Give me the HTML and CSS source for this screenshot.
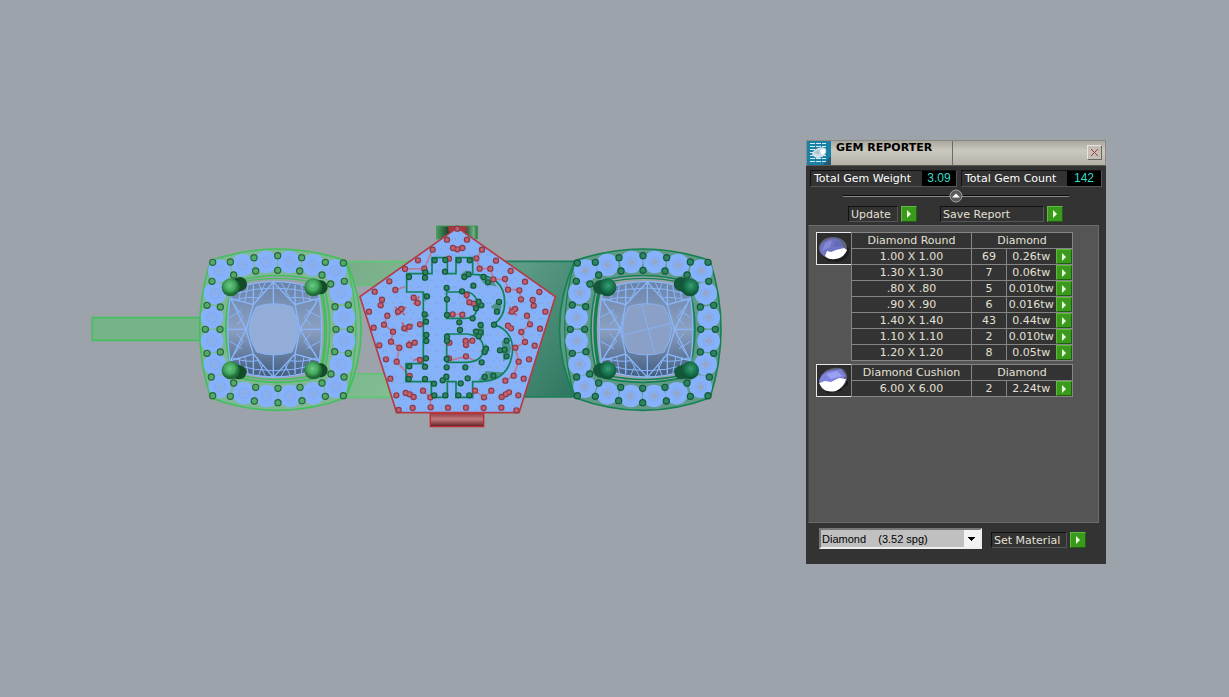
FILE: index.html
```html
<!DOCTYPE html>
<html lang="en">

<head>
    <meta charset="UTF-8">
    <meta name="viewport" content="width=device-width, initial-scale=1.0">
    <title>Gem Reporter</title>
    <link rel="stylesheet" href="styles.css">
</head>

<body>

    <main class="viewport">
        <svg class="model" viewBox="0 -30 1980 630" role="img" aria-label="Bracelet model">
            <defs>
                <linearGradient id="band-light" x1="0" y1="0" x2="1" y2="1">
                    <stop offset="0" stop-color="#78ad89" />
                    <stop offset="1" stop-color="#86c596" />
                </linearGradient>
                <linearGradient id="band-dark" x1="0" y1="0" x2="1" y2="1">
                    <stop offset="0" stop-color="#6da894" />
                    <stop offset="1" stop-color="#2c755e" />
                </linearGradient>
                <linearGradient id="tab-green">
                    <stop offset="0" stop-color="#4b9c63" />
                    <stop offset=".3" stop-color="#1a3f28" />
                    <stop offset=".7" stop-color="#1f5233" />
                    <stop offset=".9" stop-color="#6fae83" />
                    <stop offset="1" stop-color="#2a6b40" />
                </linearGradient>
                <linearGradient id="tab-red" x1="0" y1="0" x2="0" y2="1">
                    <stop offset="0" stop-color="#8e3b42" />
                    <stop offset=".45" stop-color="#c4787e" />
                    <stop offset="1" stop-color="#5c1f26" />
                </linearGradient>
                <linearGradient id="stone" x1="0" y1="0" x2="0" y2="1">
                    <stop offset="0" stop-color="#6a84a8" />
                    <stop offset=".5" stop-color="#8ba0c2" />
                    <stop offset="1" stop-color="#435d7e" />
                </linearGradient>
                <radialGradient id="light-prong" cx=".45" cy=".4">
                    <stop offset="0" stop-color="#6fc88a" />
                    <stop offset=".6" stop-color="#43a35c" />
                    <stop offset="1" stop-color="#1f6b38" />
                </radialGradient>
                <radialGradient id="dark-prong" cx=".45" cy=".4">
                    <stop offset="0" stop-color="#3c9c74" />
                    <stop offset=".6" stop-color="#1b7550" />
                    <stop offset="1" stop-color="#0f5638" />
                </radialGradient>
                <pattern id="pave" width="52" height="48" patternUnits="userSpaceOnUse">
                    <rect width="52" height="48" fill="#86b2fa" />
                    <path d="M13 4l3 3M36 4l-3 3M24 44l4 4M2 24h4M46 24h3" stroke="#6b86c4" stroke-width="2" />
                    <path d="M21 24h10M26 19v10M22 20l8 8M30 20l-8 8" stroke="#92abd6" stroke-width="2" />
                </pattern>

                <path id="halo-gems" d="M418 122h0M488 105h0M558 96h0M628 96h0M700 105h0M766 122h0M405 190h0M396 262h0M396 333h0M405 403h0M420 470h0M492 490h0M560 498h0M630 498h0M700 490h0M768 470h0M783 188h0M792 262h0M792 333h0M783 403h0" />
                <path id="halo-beads" d="M398 97h0M451 96h0M522 83h0M593 77h0M665 83h0M736 97h0M790 99h0M461 135h0M527 123h0M593 121h0M659 123h0M726 135h0M752 162h0M396 154h0M381 226h0M421 231h0M376 298h0M420 298h0M381 370h0M421 366h0M394 441h0M398 497h0M461 459h0M451 499h0M523 513h0M527 472h0M594 518h0M594 475h0M666 512h0M660 472h0M736 499h0M726 459h0M790 497h0M753 432h0M793 154h0M805 225h0M765 230h0M768 298h0M811 298h0M764 365h0M805 370h0M792 441h0" />
                <path id="red-beads" d="M322 41h0M291 74h0M351 74h0M248 104h0M309 99h0M337 99h0M322 103h0M396 104h0M204 136h0M297 131h0M379 130h0M438 137h0M165 162h0M223 161h0M389 161h0M421 161h0M482 168h0M118 199h0M430 193h0M465 192h0M525 200h0M74 230h0M136 225h0M508 226h0M474 224h0M568 231h0M96 254h0M92 271h0M548 255h0M551 272h0M191 248h0M203 264h0M513 253h0M57 290h0M154 282h0M144 290h0M586 290h0M486 290h0M495 282h0M112 302h0M531 302h0M71 338h0M102 329h0M163 340h0M178 335h0M540 328h0M570 341h0M474 332h0M483 340h0M129 350h0M514 351h0M210 328h0M88 391h0M123 380h0M525 381h0M554 392h0M177 390h0M194 383h0M148 398h0M496 398h0M108 433h0M140 440h0M537 433h0M506 440h0M210 435h0M121 491h0M179 483h0M521 491h0M466 497h0M491 482h0M139 541h0M167 534h0M179 538h0M191 546h0M219 527h0M455 546h0M467 538h0M477 532h0M424 527h0M375 527h0M402 547h0M505 541h0M241 547h0M146 585h0M188 579h0M242 577h0M294 578h0M348 578h0M401 579h0M454 578h0M499 586h0M350 240h0M358 262h0M372 266h0M308 298h0M337 299h0M347 378h0M367 377h0M348 390h0M298 383h0M348 424h0M297 430h0" />
                <path id="green-beads" d="M254 136h0M286 135h0M326 136h0M359 136h0M177 186h0M225 188h0M226 172h0M285 170h0M343 186h0M356 178h0M401 186h0M414 202h0M290 219h0M370 212h0M336 229h0M231 244h0M291 253h0M447 261h0M386 260h0M378 280h0M394 271h0M224 298h0M291 300h0M441 290h0M368 310h0M328 322h0M392 330h0M432 329h0M228 320h0M330 345h0M229 360h0M291 365h0M378 350h0M392 352h0M386 364h0M229 378h0M291 377h0M470 377h0M408 401h0M404 411h0M450 406h0M464 404h0M470 424h0M228 430h0M290 432h0M290 457h0M346 457h0M395 442h0M225 455h0M178 454h0M176 492h0M225 492h0M252 506h0M278 496h0M289 485h0M332 505h0M353 490h0M404 486h0M430 482h0M253 541h0M286 541h0M325 541h0M358 541h0" />

                <!-- cushion halo with centre stone, coloured by .light / .dark -->
                <g id="halo">
                    <path class="metal edge" d="M392 92Q593 22 797 92Q890 298 797 503Q593 579 392 503Q326 298 392 92Z" />
                    <path class="edge line" d="M797 92Q859 298 797 503" />
                    <use href="#halo-gems" class="gem" />
                    <use href="#halo-gems" class="gem-speckle" />
                    <use href="#halo-gems" class="gem-table" />
                    <path class="gem-cross" d="M408 122h20M418 112v20M478 105h20M488 95v20M548 96h20M558 86v20M618 96h20M628 86v20M690 105h20M700 95v20M756 122h20M766 112v20M395 190h20M405 180v20M386 262h20M396 252v20M386 333h20M396 323v20M395 403h20M405 393v20M410 470h20M420 460v20M482 490h20M492 480v20M550 498h20M560 488v20M620 498h20M630 488v20M690 490h20M700 480v20M758 470h20M768 460v20M773 188h20M783 178v20M782 262h20M792 252v20M782 333h20M792 323v20M773 403h20M783 393v20" />
                    <path class="opening edge" d="M462 155Q593 118 728 155Q770 298 728 440Q593 474 462 440Q412 298 462 155Z" />
                    <path class="edge rail" d="M722 172Q752 298 722 425" />
                    <path class="edge line" d="M452 180Q430 298 452 415M475 158Q590 132 705 158M475 435Q590 462 705 435" />
                    <path fill="url(#stone)" stroke="#8ab6fb" stroke-width="4" d="M478 171Q580 139 691 171Q714 180 718 204Q732 298 718 393Q714 416 691 425Q580 457 478 425Q455 416 450 393Q436 298 450 204Q455 180 478 171Z" />
                    <path class="facet" d="M520 224L498 300L520 372M645 224L660 300L645 372M452 205L520 224L580 156L645 224L716 205M452 392L520 372L580 442L645 372L716 392M445 298H498L452 205M498 298L452 392M660 298H724M716 205L660 298L716 392M580 156V224M580 442V372M520 224V164M645 224V164M520 372V432M645 372V432" />
                    <path class="facet thin" d="M470 190Q580 158 700 190M458 212Q500 198 535 204M628 204Q665 198 710 212M470 406Q580 438 700 406M458 384Q500 398 535 392M628 392Q665 398 710 384M484 170L476 215M504 166L494 218M536 160L548 190M556 158L530 215M604 158L635 215M630 160L616 190M664 166L672 218M684 170L690 215M484 426L476 381M504 430L494 378M536 436L548 406M556 438L530 381M604 438L635 381M630 436L616 406M664 430L672 378M684 426L690 381M462 222L490 262M450 262L485 240M470 285L490 262M462 374L490 334M450 334L485 356M470 311L490 334M708 222L672 262M720 262L680 240M692 285L672 262M708 374L672 334M720 334L680 356M692 311L672 334" />
                    <path class="stone-table" d="M530 230Q580 212 636 230Q672 298 636 366Q580 384 530 366Q486 298 530 230Z" />
                    <path class="prong-shadow" d="M452 172l28 -10M700 172l22 0M452 421l26 6M700 421l22 0" />
                    <g class="prongs">
                        <circle cx="452" cy="172" r="27" />
                        <circle cx="700" cy="172" r="27" />
                        <circle cx="452" cy="421" r="27" />
                        <circle cx="700" cy="421" r="27" />
                    </g>
                    <path class="prong-light" d="M439 169a13 13 0 1 0 26 0a13 13 0 1 0 -26 0M687 169a13 13 0 1 0 26 0a13 13 0 1 0 -26 0M439 418a13 13 0 1 0 26 0a13 13 0 1 0 -26 0M687 418a13 13 0 1 0 26 0a13 13 0 1 0 -26 0" />
                    <use href="#halo-beads" class="bead-rim" />
                    <use href="#halo-beads" class="bead" />
                </g>
            </defs>

            <!-- bands -->
            <path d="M37 263H360V331H37Z" fill="#77b389" stroke="#45bf5f" stroke-width="5" />
            <path d="M797 95H1110V165H815V432H1110V502H797Z" fill="url(#band-light)" />
            <path d="M797 95H1110M815 165H1110M815 432H1110M797 502H1110" fill="none" stroke="#5cc873" stroke-width="5" />
            <path d="M1180 94H1500V501H1180Z" fill="url(#band-dark)" stroke="#17805a" stroke-width="5" />

            <g class="light">
                <use href="#halo" />
            </g>
            <g class="dark" transform="translate(2282) scale(-1 1)">
                <use href="#halo" />
            </g>
            <path d="M1685 225L1725 370M1628 315L1782 278" stroke="#86b1f4" stroke-width="3" />

            <!-- pentagon plate -->
            <g transform="translate(810 -45)">
                <path d="M260 33H383V72H260Z" fill="url(#tab-green)" stroke="#3f9a5b" stroke-width="3" />
                <path d="M295 33H350V50H295Z" fill="#a23a40" />
                <path d="M241 594H401V635H241Z" fill="url(#tab-red)" stroke="#c0282e" stroke-width="4" />
                <path d="M322 38L616 245L507 593H140L30 245Z" fill="url(#pave)" stroke="#b83a40" stroke-width="5" />
                <path class="branch" d="M309 99H337M396 104L379 130L389 161H421L430 193H465L474 224H508L513 253M248 104L223 161L165 162M136 225L165 215M112 302L102 329L129 350L123 380L148 398L140 440L179 483M531 302L540 328L514 351L525 381L496 398L506 440L491 482L466 497M167 534L191 546M219 527L241 547M241 547V577M375 527L402 547L424 527M455 546L477 532M96 254L92 271M548 255L551 272M308 298H337M300 436L348 424L375 438" />
                <path class="burst" d="M135 276L165 300M168 276L138 302M190 240L204 270M208 244L190 268M156 322L172 352M156 344L190 328M176 376L186 400M168 390L202 382M478 276L500 302M472 296L506 282M466 328L490 346M340 372L356 396M340 384L374 374M190 436L214 428M348 250L378 270" />
                <path class="leaf" d="M422 275L448 255Q462 270 447 296ZM365 345L402 335V365ZM385 180Q430 190 440 215L400 205ZM455 378Q478 370 484 400Q480 425 460 440ZM385 496L408 468Q435 470 460 472Q440 496 400 498ZM215 230L240 240L225 260ZM217 290L240 300L222 315ZM270 500L290 480L300 500ZM330 180L350 165L362 184ZM392 410L408 385L415 410Z" />
                <path class="coin" d="M170 176H246V128H292V176H318V128H368V178Q464 180 464 262Q464 308 430 328Q488 345 488 405Q480 498 392 500H368V547H318V500H292V547H244V500H168V446H220V231H170ZM290 231H355Q382 240 382 270Q382 310 345 310H290ZM290 357H350Q400 362 400 400Q400 440 350 442H290Z" />
                <g class="pave-beads">
                    <use href="#red-beads" class="red bead-rim" />
                    <use href="#red-beads" class="red bead" />
                    <use href="#green-beads" class="dark bead-rim" />
                    <use href="#green-beads" class="dark bead" />
                </g>
            </g>
        </svg>

        <section class="reporter" aria-label="Gem Reporter">
            <header class="title-bar">
                <svg class="app-icon" viewBox="0 0 24 24" aria-hidden="true">
                    <rect width="24" height="24" fill="#1980a6" />
                    <path d="M24 0V24H16L24 15Z" fill="#245b77" />
                    <path d="M3 2.500h16M3 5.500h16M3 8.500h16M3 11.500h16M3 14.500h16M3 17.500h16M3 20.500h16" stroke="#d5edf6" stroke-dasharray="5 1" />
                    <path d="M5 13Q6 9 11 7Q17 5 19 8Q20 13 15 16Q8 19 5 13Z" fill="#cfdfe8" />
                    <path d="M7 12Q9 9 13 9L12 14Z" fill="#a9c4d4" />
                    <path d="M13 9L18 8Q19 12 15 14Z" fill="#fff" />
                </svg>
                <h1>GEM REPORTER</h1>
                <button class="close" type="button" aria-label="Close">
                    <svg viewBox="0 0 9 9" aria-hidden="true"><path d="M1 1l7 7M8 1l-7 7" stroke="#b5353a" /></svg>
                </button>
            </header>

            <div class="totals">
                <div class="total"><span class="caption">Total Gem Weight</span><output class="value">3.09</output></div>
                <div class="total"><span class="caption">Total Gem Count</span><output class="value">142</output></div>
            </div>

            <div class="divider">
                <button class="collapse" type="button" aria-label="Collapse">
                    <svg viewBox="0 0 14 14" aria-hidden="true">
                        <circle cx="7" cy="7" r="6" fill="#5b5b5b" stroke="#a5a5a5" />
                        <path d="M3 8.500L7 4.500L11 8.500Z" fill="#fff" />
                    </svg>
                </button>
            </div>

            <div class="actions">
                <div class="action">
                    <label class="action-label short" for="update">Update</label>
                    <button class="go" id="update" type="button"></button>
                </div>
                <div class="action">
                    <label class="action-label long" for="save">Save Report</label>
                    <button class="go" id="save" type="button"></button>
                </div>
            </div>

            <div class="report">
                <div class="group">
                    <svg class="thumb" viewBox="0 0 34 31" aria-hidden="true">
                        <rect width="34" height="31" fill="#2d2d2d" />
                        <ellipse cx="18" cy="18" rx="14" ry="11" fill="#1c1c1c" />
                        <ellipse cx="16" cy="15" rx="14" ry="11" fill="#62647c" />
                        <path d="M3 18Q2 11 9 8Q15 4 22 7L27 15L24 22L10 24Q4 22 3 18Z" fill="#6f73c4" />
                        <path d="M8 10L15 7L13 14L5 18Z" fill="#8589d6" />
                        <path d="M18 7L25 9L24 14L17 13Z" fill="#6469b8" />
                        <path d="M10 18L14 19L19 17L27 15L30 17Q27 25 18 26Q12 27 8 23Z" fill="#fff" />
                    </svg>
                    <table>
                        <colgroup><col class="c-size"><col class="c-count"><col class="c-weight"><col class="c-go"></colgroup>
                        <thead>
                            <tr><th>Diamond Round</th><th colspan="3">Diamond</th></tr>
                        </thead>
                        <tbody>
                            <tr><td>1.00 X 1.00</td><td>69</td><td>0.26tw</td><td><button class="go" type="button" aria-label="Select 1.00 X 1.00"></button></td></tr>
                            <tr><td>1.30 X 1.30</td><td>7</td><td>0.06tw</td><td><button class="go" type="button" aria-label="Select 1.30 X 1.30"></button></td></tr>
                            <tr><td>.80 X .80</td><td>5</td><td>0.010tw</td><td><button class="go" type="button" aria-label="Select .80 X .80"></button></td></tr>
                            <tr><td>.90 X .90</td><td>6</td><td>0.016tw</td><td><button class="go" type="button" aria-label="Select .90 X .90"></button></td></tr>
                            <tr><td>1.40 X 1.40</td><td>43</td><td>0.44tw</td><td><button class="go" type="button" aria-label="Select 1.40 X 1.40"></button></td></tr>
                            <tr><td>1.10 X 1.10</td><td>2</td><td>0.010tw</td><td><button class="go" type="button" aria-label="Select 1.10 X 1.10"></button></td></tr>
                            <tr><td>1.20 X 1.20</td><td>8</td><td>0.05tw</td><td><button class="go" type="button" aria-label="Select 1.20 X 1.20"></button></td></tr>
                        </tbody>
                    </table>
                </div>

                <div class="group">
                    <svg class="thumb" viewBox="0 0 34 31" aria-hidden="true">
                        <rect width="34" height="31" fill="#2d2d2d" />
                        <path d="M5 20Q20 30 31 19L30 12L24 26L10 28Z" fill="#171717" />
                        <path d="M2 17Q3 9 10 5Q19 1 26 4Q31 8 30 15Q27 24 16 26Q5 26 2 17Z" fill="#5d6078" />
                        <path d="M2 17Q3 10 11 6L24 4L29 11L20 18L8 17Z" fill="#7d82dc" />
                        <path d="M9 9L20 6L25 11L14 14Z" fill="#9ba1f0" />
                        <path d="M2 18L8 16L14 17L22 13L29 14Q27 22 19 26Q10 28 5 23Z" fill="#fff" />
                    </svg>
                    <table>
                        <colgroup><col class="c-size"><col class="c-count"><col class="c-weight"><col class="c-go"></colgroup>
                        <thead>
                            <tr><th>Diamond Cushion</th><th colspan="3">Diamond</th></tr>
                        </thead>
                        <tbody>
                            <tr><td>6.00 X 6.00</td><td>2</td><td>2.24tw</td><td><button class="go" type="button" aria-label="Select 6.00 X 6.00"></button></td></tr>
                        </tbody>
                    </table>
                </div>
            </div>

            <footer class="material">
                <div class="picker">
                    <select aria-label="Material">
                        <option>Diamond &nbsp;&nbsp; (3.52 spg)</option>
                    </select>
                </div>
                <div class="action">
                    <label class="action-label medium" for="set-material">Set Material</label>
                    <button class="go" id="set-material" type="button"></button>
                </div>
            </footer>
        </section>
    </main>

</body>

</html>
```
FILE: styles.css
```css
* {
    box-sizing: border-box;
}

body {
    margin: 0;
    background: #9ca3ab;
    color: #e4e0d6;
    font-family: Verdana, "DejaVu Sans", sans-serif;
    font-size: 11px;
    line-height: 15px;
}

button {
    padding: 0;
    border: 0;
    cursor: pointer;
}

.viewport {
    position: relative;
    min-height: 100vh;
    overflow: hidden;
}

/* model on the canvas */
.model {
    position: absolute;
    left: 80px;
    top: 220px;
    width: 660px;
}

.light {
    --metal: #7fb894;
    --edge: #41c05b;
    --rim: #2c6339;
    --bead: #4fab68;
    --shadow: #124d27;
    --table: #93add9;
    --cross: #8aaeea;
    --prong: url(#light-prong);
}

.dark {
    --metal: #5f9a88;
    --edge: #138253;
    --rim: #14573a;
    --bead: #2a8560;
    --shadow: #14573a;
    --table: #8aa0c6;
    --cross: #93a7cc;
    --prong: url(#dark-prong);
}

.red {
    --rim: #8a3a4a;
    --bead: #c0606c;
}

.metal {
    fill: var(--metal);
}

.edge {
    stroke: var(--edge);
    stroke-width: 5;
}

.line {
    fill: none;
    stroke-width: 4;
}

.rail {
    fill: none;
    stroke-width: 10;
}

.opening {
    fill: #9ca3ab;
}

.gem,
.gem-speckle,
.gem-table,
.bead,
.bead-rim {
    fill: none;
    stroke-linecap: round;
}

.gem {
    stroke: #86b2fb;
    stroke-width: 68;
}

.gem-speckle {
    stroke: #80aaf2;
    stroke-width: 34;
}

.gem-table {
    stroke: #88b0f3;
    stroke-width: 28;
}

.gem-cross {
    stroke: var(--cross);
    stroke-width: 9;
}

.bead-rim {
    stroke: var(--rim);
    stroke-width: 22;
}

.bead {
    stroke: var(--bead);
    stroke-width: 15;
}

.pave-beads .bead-rim {
    stroke-width: 19;
}

.pave-beads .bead {
    stroke-width: 12;
}

.facet {
    fill: none;
    stroke: #8ab6fb;
    stroke-width: 4;
}

.thin {
    stroke-width: 3;
}

.stone-table {
    fill: var(--table);
    stroke: #87b3f8;
    stroke-width: 3;
}

.prongs {
    fill: var(--prong);
}

.prong-shadow {
    fill: none;
    stroke: var(--shadow);
    stroke-width: 42;
    stroke-linecap: round;
}

.prong-light {
    fill: none;
    stroke: var(--edge);
    stroke-width: 2;
}

.branch {
    fill: none;
    stroke: #bb7b90;
    stroke-width: 5;
}

.burst {
    fill: none;
    stroke: #b9687c;
    stroke-width: 6;
}

.leaf {
    fill: #4d9488;
}

.coin {
    fill: none;
    stroke: #0f8257;
    stroke-width: 5;
}

/* reporter window */
.reporter {
    position: absolute;
    left: 806px;
    top: 140px;
    width: 300px;
    padding-bottom: 15px;
    background: #333;
}

.title-bar {
    display: flex;
    height: 26px;
    border: 1px solid #8b8982;
    border-bottom-color: #5a5853;
    background: linear-gradient(#aaa79f, #cbc8bf 40%, #b5b2aa);
}

.app-icon {
    width: 24px;
    height: 24px;
}

h1 {
    width: 122px;
    margin: 0;
    padding-left: 5px;
    border-right: 1px solid #6e6b66;
    color: #000;
    font-size: 11px;
    line-height: 14px;
}

.close {
    display: grid;
    place-items: center;
    width: 15px;
    height: 15px;
    margin: 4px 3px 0 auto;
    border: 1px solid #6b6863;
    border-top-color: #e8e5dd;
    border-left-color: #e8e5dd;
    background: #c2bfb6;
}

.close svg {
    width: 9px;
}

.totals {
    display: flex;
    gap: 4px;
    padding: 4px 4px 0;
}

.total {
    display: flex;
    border: 1px solid #555;
    border-top-color: #111;
    border-left-color: #111;
    color: #fff;
}

.caption {
    padding: 0 4px 0 3px;
}

.total:first-child .caption {
    width: 111px;
}

.total:last-child .caption {
    width: 105px;
}

.value {
    width: 34px;
    background: #000;
    color: #35dccb;
    font-family: "Liberation Sans", sans-serif;
    font-size: 12px;
    text-align: center;
}

.divider {
    display: flex;
    justify-content: center;
    height: 16px;
    margin: 2px 37px 0;
    background: linear-gradient(#0d0d0d, #0d0d0d) 0 6px / 100% 1px no-repeat, linear-gradient(#888, #888) 0 7px / 100% 1px no-repeat;
}

.collapse {
    width: 14px;
    height: 14px;
    background: none;
}

.collapse svg {
    display: block;
}

.actions {
    display: flex;
    gap: 23px;
    padding: 1px 42px 3px;
}

.action {
    display: flex;
    gap: 3px;
}

.action-label {
    height: 16px;
    padding-left: 2px;
    border: 1px solid #555;
    border-top-color: #111;
    border-left-color: #111;
    white-space: nowrap;
}

.short {
    width: 50px;
}

.medium {
    width: 76px;
}

.long {
    width: 104px;
}

.go {
    display: grid;
    place-items: center;
    width: 16px;
    height: 16px;
    border: 1px solid #205f10;
    border-top-color: #62b942;
    border-left-color: #62b942;
    background: #399a1c;
}

.go::before {
    content: "";
    border: 4px solid transparent;
    border-left-color: #eaffdf;
    border-right-width: 0;
}

.report {
    display: flex;
    flex-direction: column;
    gap: 3px;
    min-height: 298px;
    margin: 0 7px 0 2px;
    padding: 6px 7px;
    border: 1px solid #6b6b6b;
    border-left-color: #444;
    background: #555;
}

.group {
    display: flex;
    align-items: flex-start;
}

.thumb {
    width: 36px;
    height: 33px;
    border: 1px solid #e8e8e8;
}

table {
    width: 222px;
    margin-left: -1px;
    border-collapse: collapse;
    table-layout: fixed;
    background: #333;
    text-align: center;
}

.c-size {
    width: 120px;
}

.c-count {
    width: 35px;
}

.c-weight {
    width: 49px;
}

.c-go {
    width: 17px;
}

th,
td {
    height: 16px;
    padding: 0;
    border: 1px solid #858585;
    font-weight: normal;
    white-space: nowrap;
}

td:nth-child(3) {
    border-right: 0;
}

td:last-child {
    border-left: 0;
}

td .go {
    height: 15px;
}

.material {
    display: flex;
    gap: 9px;
    padding: 5px 13px 0;
}

.picker {
    position: relative;
    width: 163px;
}

select {
    display: block;
    width: 100%;
    height: 21px;
    padding: 0 1px;
    border: 2px solid #eee;
    border-top-color: #777;
    border-left-color: #777;
    border-radius: 0;
    appearance: none;
    background: #c0c0c0;
    color: #000;
    font-family: "Liberation Sans", sans-serif;
    font-size: 11px;
}

.picker::after {
    content: "";
    position: absolute;
    top: 2px;
    right: 2px;
    width: 16px;
    height: 17px;
    background: linear-gradient(#000, #000) 4px 7px / 7px 1px no-repeat, linear-gradient(#000, #000) 5px 8px / 5px 1px no-repeat, linear-gradient(#000, #000) 6px 9px / 3px 1px no-repeat, linear-gradient(#000, #000) 7px 10px / 1px 1px no-repeat, #f2f2f2;
    pointer-events: none;
}

.material .action {
    padding-top: 4px;
}
```
